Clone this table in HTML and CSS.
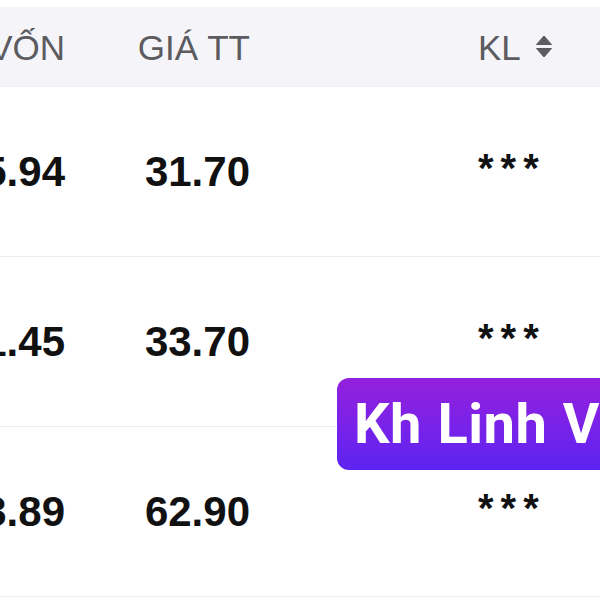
FILE: index.html
```html
<!DOCTYPE html>
<html lang="vi">
<head>
<meta charset="utf-8">
<link rel="stylesheet" href="styles.css">
</head>
<body>
<div class="page">
  <div class="table">
    <div class="row head">
      <div class="cell c1"><span>GIÁ VỐN</span></div>
      <div class="cell c2"><span>GIÁ TT</span></div>
      <div class="cell c3"><span>KL</span>
        <svg class="sort" width="16" height="21" viewBox="0 0 16 21"><path d="M8 0 L15.5 8.5 H0.5 Z" fill="#5b5b60" stroke="#5b5b60" stroke-linejoin="round" stroke-width="1"/><path d="M0.5 12.5 H15.5 L8 21 Z" fill="#5b5b60" stroke="#5b5b60" stroke-linejoin="round" stroke-width="1"/></svg>
      </div>
    </div>
    <div class="row body">
      <div class="cell c1"><span>25.94</span></div>
      <div class="cell c2"><span>31.70</span></div>
      <div class="cell c3"><span class="stars">***</span></div>
    </div>
    <div class="row body">
      <div class="cell c1"><span>31.45</span></div>
      <div class="cell c2"><span>33.70</span></div>
      <div class="cell c3"><span class="stars">***</span></div>
    </div>
    <div class="row body">
      <div class="cell c1"><span>53.89</span></div>
      <div class="cell c2"><span>62.90</span></div>
      <div class="cell c3"><span class="stars">***</span></div>
    </div>
    <div class="badge">Kh Linh Vũ</div>
  </div>
</div>
</body>
</html>
```
FILE: styles.css
```css
html, body {
  margin: 0;
  padding: 0;
  background: #ffffff;
  overflow: hidden;
  width: 600px;
  height: 600px;
}
.page {
  padding-top: 7px;
  font-family: "Liberation Sans", Arial, sans-serif;
}
.table {
  position: relative;
}
.row {
  display: grid;
  grid-template-columns: 65px 185px 1fr;
  align-items: center;
}
.cell {
  display: flex;
  align-items: center;
  white-space: nowrap;
}
.c1, .c2 {
  justify-content: flex-end;
}
.c3 {
  padding-left: 228px;
}
.head {
  height: 79px;
  background: #f5f5f9;
  color: #5b5b60;
  font-size: 35px;
  border-bottom: 1px solid #efeff3;
}
.head .cell span {
  position: relative;
  top: 1px;
}
.sort {
  margin-left: 15px;
}
.body {
  height: 169px;
  border-bottom: 1px solid #ececee;
  font-size: 42px;
  font-weight: bold;
  color: #111111;
}
.stars {
  font-size: 40px;
  letter-spacing: 7px;
  position: relative;
  top: -3px;
}
.badge {
  position: absolute;
  left: 337px;
  top: 371px;
  width: 320px;
  height: 92px;
  box-sizing: border-box;
  padding-left: 17px;
  display: flex;
  align-items: center;
  border-radius: 12px;
  background: linear-gradient(180deg, #9420dc 0%, #7a22e8 50%, #5c24f2 100%);
  color: #ffffff;
  font-family: Roboto, "Liberation Sans", sans-serif;
  font-weight: bold;
  font-size: 56px;
  letter-spacing: 0.5px;
  word-spacing: 1px;
  white-space: nowrap;
}
```
